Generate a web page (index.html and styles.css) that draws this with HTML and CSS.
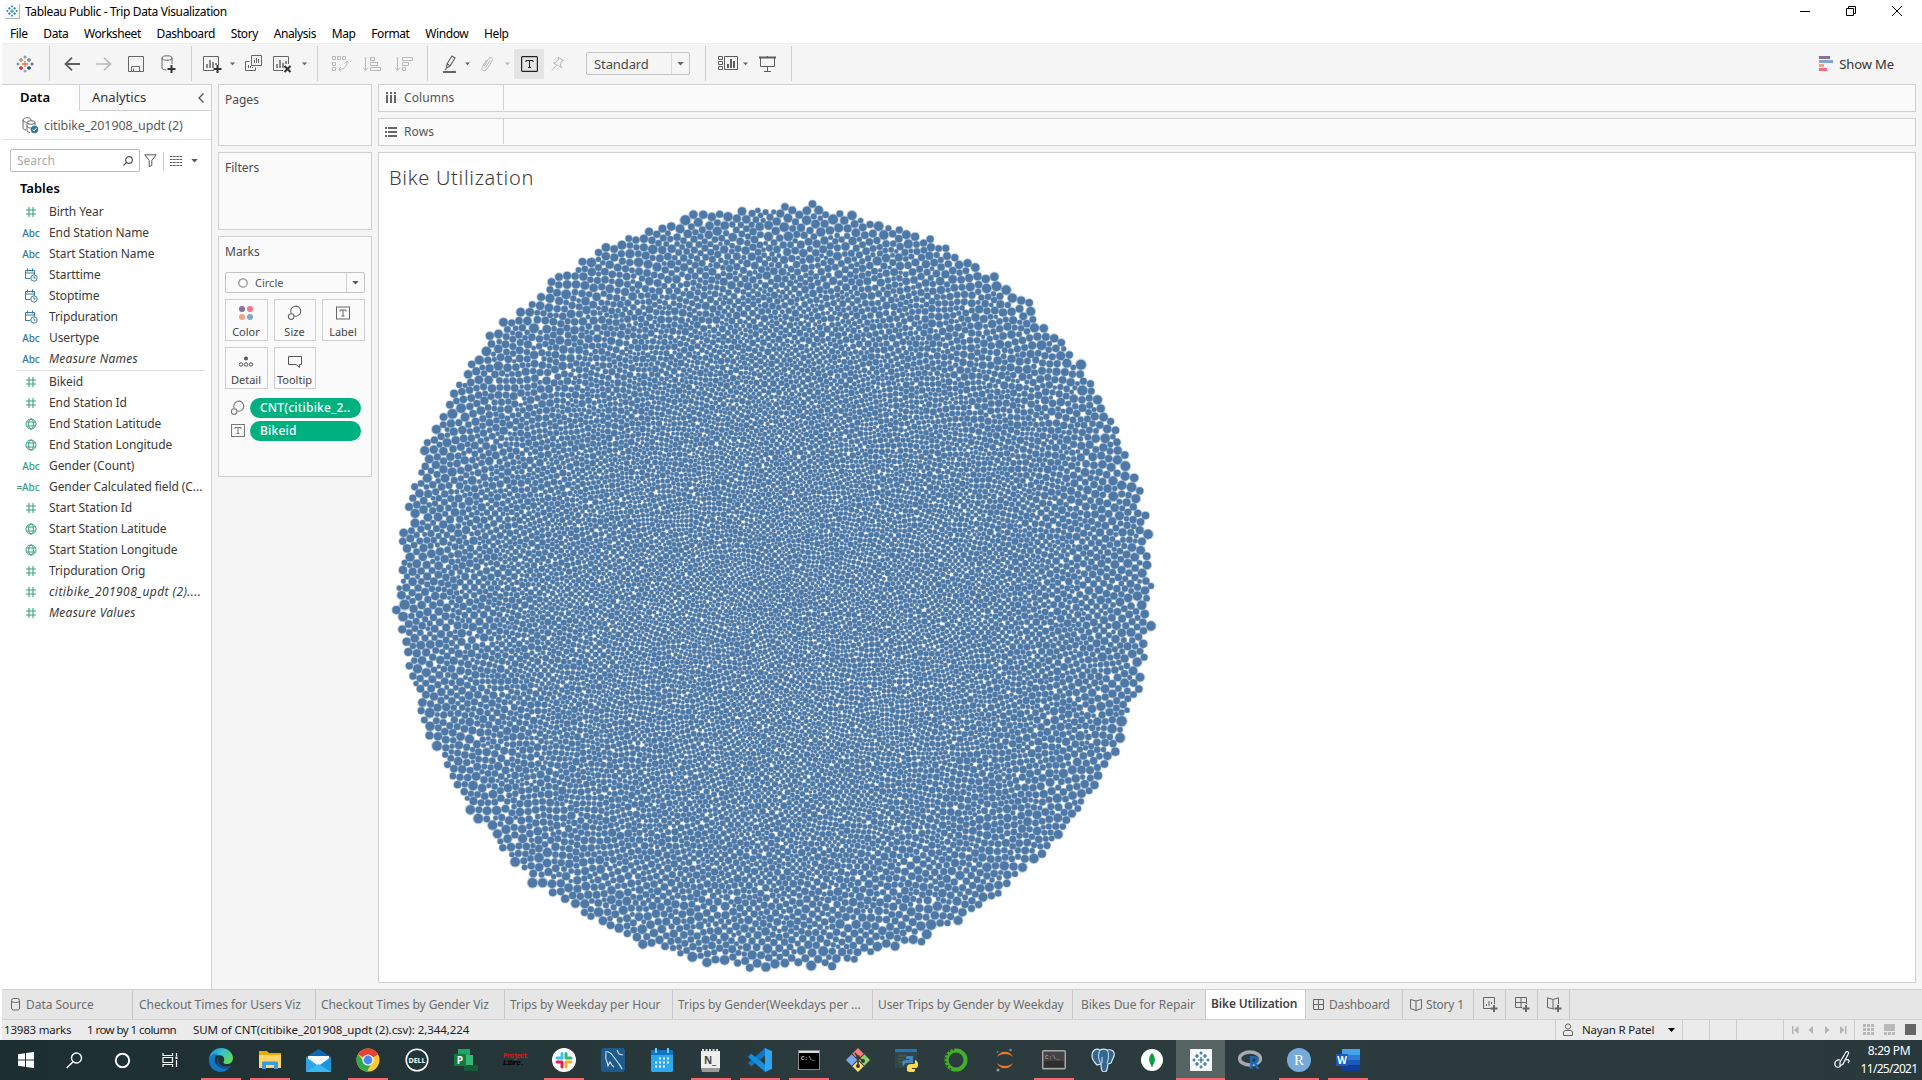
FILE: index.html
```html
<!DOCTYPE html>
<html lang="en">
<head>
<meta charset="utf-8">
<title>Tableau Public - Trip Data Visualization</title>
<link rel="stylesheet" href="styles.css">
</head>
<body>
<svg class="defs" width="0" height="0">
  <symbol id="hash" viewBox="0 0 12 12"><path d="M4 1v10M8 1v10M1 4h10M1 8h10" fill="none" stroke="currentColor" stroke-width="1.1"/></symbol>
  <symbol id="globe" viewBox="0 0 12 12"><g fill="none" stroke="currentColor"><circle cx="6" cy="6" r="5"/><ellipse cx="6" cy="6" rx="2.3" ry="5"/><path d="M1.5 4h9M1.5 8h9"/></g></symbol>
  <symbol id="datetime" viewBox="0 0 14 14"><g fill="none" stroke="currentColor"><path d="M6 10.5H1.500v-8h9v4M1.500 5h9M3.500.5v3M8.500.5v3"/><circle cx="10" cy="10" r="3.200"/><path d="M10 8.200v2h1.500"/></g></symbol>
  <symbol id="down" viewBox="0 0 8 5"><path d="M0 0h8L4 4.500z" fill="currentColor"/></symbol>
  <symbol id="size" viewBox="0 0 16 16"><g fill="none" stroke="currentColor" stroke-width="1.100"><path d="M4.200 8.200A5 5 0 1 1 7.500 11"/><circle cx="4.200" cy="11.600" r="2.800"/></g></symbol>
  <symbol id="label" viewBox="0 0 14 13"><rect x=".5" y=".5" width="13" height="12" fill="none" stroke="currentColor"/><path d="M4 5V3.500h6V5M7 3.500v6M5.500 9.500h3" fill="none" stroke="currentColor"/></symbol>
  <symbol id="sparkle" viewBox="0 0 18 18"><g fill="none" stroke-width="1.300"><path d="M9 6v6M6 9h6" stroke="#e8762c"/><path d="M5 3v4M3 5h4" stroke="#c98a56"/><path d="M13 3v4M11 5h4" stroke="#5b879b"/><path d="M5 11v4M3 13h4" stroke="#c72035"/><path d="M13 11v4M11 13h4" stroke="#1f447e"/><path d="M9 .5v3M7.500 2h3" stroke="#7199a6"/><path d="M9 14.500v3M7.500 16h3" stroke="#8aa0c5"/><path d="M2 7.500v3M.5 9h3" stroke="#7199a6"/><path d="M16 7.500v3M14.500 9h3" stroke="#59649a"/></g></symbol>
  <symbol id="sparkle-blue" viewBox="0 0 18 18"><g fill="none" stroke="currentColor" stroke-width="1.200"><path d="M9 6v6M6 9h6M5 3v4M3 5h4M13 3v4M11 5h4M5 11v4M3 13h4M13 11v4M11 13h4M9 .5v3M7.500 2h3M9 14.500v3M7.500 16h3M2 7.500v3M.5 9h3M16 7.500v3M14.500 9h3"/></g></symbol>
</svg>

<header class="titlebar">
  <span class="app-icon"><svg width="12" height="12"><use href="#sparkle-blue"/></svg></span>
  <span class="app-title">Tableau Public - Trip Data Visualization</span>
  <span class="win-controls">
    <svg width="10" height="10"><path d="M0 5.500h10" stroke="#000"/></svg>
    <svg width="10" height="10" fill="none" stroke="#000"><path d="M.5 2.500h7v7h-7zM2.500 2.500v-2h7v7h-2"/></svg>
    <svg width="10" height="10" stroke="#000"><path d="M0 0l10 10M10 0L0 10"/></svg>
  </span>
</header>

<nav class="menubar"><span>File</span><span>Data</span><span>Worksheet</span><span>Dashboard</span><span>Story</span><span>Analysis</span><span>Map</span><span>Format</span><span>Window</span><span>Help</span></nav>

<div class="toolbar">
  <div class="group g-home"><span class="c32"><svg width="18" height="18"><use href="#sparkle"/></svg></span></div>
  <div class="group g-file">
    <span class="c32"><svg width="16" height="14" fill="none" stroke="#5f5f5f" stroke-width="1.800"><path d="M16 7H1.500M8 .7L1.500 7 8 13.300"/></svg></span>
    <span class="c32 off"><svg width="16" height="14" fill="none" stroke="currentColor" stroke-width="1.600"><path d="M0 7h14.500M8 .7L14.500 7 8 13.300"/></svg></span>
    <span class="c32"><svg width="16" height="16" fill="none" stroke="#666"><path d="M.5.5h15v15H.5zM3.500 15.500v-5h8v5M5.500 12.500v3"/></svg></span>
    <span class="c32"><svg width="15" height="18" fill="none" stroke="#666"><path d="M1 3v10c0 1.200 2 2 4.500 2M11 3v6"/><ellipse cx="6" cy="3" rx="5" ry="2.200"/><path d="M10.500 10v8M6.500 14h8" stroke="#333" stroke-width="2"/></svg></span>
  </div>
  <div class="group g-sheet">
    <span class="c24"><svg width="19" height="18" fill="none" stroke="#666"><path d="M11 15.500H.5V1.500h15V10"/><path d="M4 13V9M7 13V5M10 13V7M13 10V8" stroke-width="1.500"/><path d="M14.500 10v8M10.500 14h8" stroke="#333" stroke-width="2"/></svg></span>
    <span class="c16"><svg width="5" height="4"><use href="#down"/></svg></span>
    <span class="c26"><svg width="17" height="17" fill="none" stroke="#666"><path d="M6.500.5h10v10h-10zM4.500 6.500h-4v9h10v-3M9.500 8V5M11.500 8V3M13.500 8V4M3.500 13v-3M5.500 13v-2M7.500 13v-1"/></svg></span>
    <span class="c36"><svg width="19" height="18" fill="none" stroke="#666"><path d="M10 15.500H.5V1.500h15V9"/><path d="M4 13V9M7 13V5M10 13V8M13 9V6" stroke-width="1.500"/><path d="M11.500 11l6 6M17.500 11l-6 6" stroke="#333" stroke-width="2"/></svg></span>
    <span class="c10"><svg width="5" height="4"><use href="#down"/></svg></span>
  </div>
  <div class="group g-sort off">
    <span class="c32"><svg width="17" height="17" fill="none" stroke="currentColor"><path d="M.5 1.500h3v3h-3zM5.500 1.500h3v3h-3zM10.500 1.500h3v3h-3zM.5 7.500h3v3h-3zM.5 12.500h3v3h-3zM15 6.500c0 5-3 8-8 8M12.500 8.500l2.500-2.500 2 2.500M9 12l-2.500 2.500 2.500 2"/></svg></span>
    <span class="c32"><svg width="18" height="16" fill="none" stroke="currentColor"><path d="M2.500 1v13M0 11.500l2.500 3 2.500-3M7.500 1.500h4v3h-4zM7.500 6.500h7v3h-7zM7.500 11.500h10v3h-10z"/></svg></span>
    <span class="c32"><svg width="18" height="16" fill="none" stroke="currentColor"><path d="M2.500 1v13M0 11.500l2.500 3 2.500-3M7.500 1.500h10v3h-10zM7.500 6.500h6v3h-6zM7.500 11.500h3v3h-3z"/></svg></span>
  </div>
  <div class="group g-edit">
    <span class="c20"><svg width="14" height="18" fill="none" stroke="#666" stroke-width="1.200"><path d="M4 9L9 1l3 2-5 8-3.500 2zM3.500 8.500l4 2.500M3.500 13L2 15"/><path d="M0 17h13" stroke-width="2"/></svg></span>
    <span class="c14"><svg width="5" height="4"><use href="#down"/></svg></span>
    <span class="c26 off"><svg width="14" height="16" fill="none" stroke="currentColor"><path d="M4 10.500L8.500 3c1.700-2.800 5-.8 3.500 2L7 13c-2 3.500-6.500 1.200-4.700-2L6.500 4M5.500 11.500L10 4.500"/></svg></span>
    <span class="c14 off"><svg width="5" height="4"><use href="#down"/></svg></span>
    <span class="toggle"><svg width="17" height="16" fill="none" stroke="#222"><rect x=".6" y=".6" width="15.800" height="14.800" rx="1" stroke-width="1.200"/><path d="M5 6V4.500h7V6M8.500 4.500v7M7 11.500h3"/></svg></span>
    <span class="c28 off"><svg width="14" height="16" fill="none" stroke="currentColor"><path d="M7 1l5.500 3.500-2 .5-1 4 1 2.500-8-4.500 2.500-.5L8 3zM5.500 9L1 14.500"/></svg></span>
    <span class="fit-select"><b>Standard</b><i><svg width="7" height="4"><use href="#down"/></svg></i></span>
  </div>
  <div class="group g-show">
    <svg width="20" height="15" fill="none" stroke="#5c5c5c"><path d="M.5.5h4v3h-4zM.5 5.500h4v3h-4zM.5 10.500h4v3h-4zM6.500.5h13v13h-13z"/><path d="M10 12V8M13 12V3M16 12V5" stroke-width="2"/></svg>
    <span class="c14"><svg width="5" height="4"><use href="#down"/></svg></span>
    <svg class="present" width="17" height="16" fill="none" stroke="#5c5c5c"><path d="M0 1.500h17" stroke-width="2"/><path d="M1.500 2v8.500h14V2M8.500 0v1M8.500 11v4M5 15.500h7"/></svg>
  </div>
  <div class="show-me"><svg width="14" height="15"><path d="M0 0h11v3H0z" fill="#8a6f98"/><path d="M0 4h14v3H0z" fill="#82a6cf"/><path d="M0 8h5v3H0z" fill="#f0a583"/><path d="M0 12h8v3H0z" fill="#f76c82"/></svg><span>Show Me</span></div>
</div>

<main class="workspace">
  <aside class="data-pane">
    <div class="pane-tabs"><b class="t-data">Data</b><span class="t-analytics">Analytics<svg width="6" height="10" fill="none" stroke="#555" stroke-width="1.300"><path d="M5.500.5L1 5l4.500 4.500"/></svg></span></div>
    <div class="source"><svg width="17" height="17" fill="none" stroke="#666"><path d="M1 3v8c0 1 1 2 3 2M1 3c0-3 8-3 8 0M1 3c0 1.500 2 2 3 2"/><ellipse cx="9" cy="5.500" rx="4" ry="1.800"/><path d="M5 5.500v8c0 1 1.500 2 3 2M13 5.500v3M5 9c0 1 2 2 4 2"/><circle cx="12.500" cy="12.500" r="3.800" fill="#367a9b" stroke="none"/><path d="M10.800 12.500l1.300 1.400 2.300-2.700" stroke="#fff"/></svg><span>citibike_201908_updt (2)</span></div>
    <div class="search-row">
      <div class="search"><span>Search</span><svg width="10" height="10" fill="none" stroke="#555" stroke-width="1.200"><circle cx="6" cy="4" r="3.300"/><path d="M3.600 6.400L.5 9.500"/></svg></div>
      <svg class="funnel" width="13" height="13" fill="none" stroke="#555"><path d="M.8.800h11.400L7.800 6.500v5l-2.600 1v-6z"/></svg>
      <span class="view"><svg width="12" height="10" fill="none" stroke="#555"><path d="M0 .5h12M0 3.500h12M0 6.500h12M0 9.500h12" stroke-dasharray="2.500 .7"/></svg></span>
      <svg class="dd" width="7" height="4"><use href="#down"/></svg>
    </div>
    <h3>Tables</h3>
    <ul class="fields">
      <li class="m"><svg width="12" height="12"><use href="#hash"/></svg>Birth Year</li>
      <li><b>Abc</b>End Station Name</li>
      <li><b>Abc</b>Start Station Name</li>
      <li><svg width="14" height="14"><use href="#datetime"/></svg>Starttime</li>
      <li><svg width="14" height="14"><use href="#datetime"/></svg>Stoptime</li>
      <li><svg width="14" height="14"><use href="#datetime"/></svg>Tripduration</li>
      <li><b>Abc</b>Usertype</li>
      <li><b>Abc</b><em>Measure Names</em></li>
    </ul>
    <ul class="fields measures">
      <li><svg width="12" height="12"><use href="#hash"/></svg>Bikeid</li>
      <li><svg width="12" height="12"><use href="#hash"/></svg>End Station Id</li>
      <li><svg width="12" height="12"><use href="#globe"/></svg>End Station Latitude</li>
      <li><svg width="12" height="12"><use href="#globe"/></svg>End Station Longitude</li>
      <li><b>Abc</b>Gender (Count)</li>
      <li><b class="calc">=Abc</b>Gender Calculated field (C...</li>
      <li><svg width="12" height="12"><use href="#hash"/></svg>Start Station Id</li>
      <li><svg width="12" height="12"><use href="#globe"/></svg>Start Station Latitude</li>
      <li><svg width="12" height="12"><use href="#globe"/></svg>Start Station Longitude</li>
      <li><svg width="12" height="12"><use href="#hash"/></svg>Tripduration Orig</li>
      <li><svg width="12" height="12"><use href="#hash"/></svg><em class="wide">citibike_201908_updt (2)....</em></li>
      <li><svg width="12" height="12"><use href="#hash"/></svg><em>Measure Values</em></li>
    </ul>
  </aside>

  <section class="cards">
    <div class="card pages">Pages</div>
    <div class="card filters">Filters</div>
    <div class="card marks">
      <div class="card-title">Marks</div>
      <div class="mark-select"><svg width="10" height="10"><circle cx="5" cy="5" r="4.200" fill="none" stroke="#999" stroke-width="1.300"/></svg><span>Circle</span><i><svg width="7" height="4"><use href="#down"/></svg></i></div>
      <div class="mark-buttons">
        <div><svg width="16" height="16"><circle cx="4" cy="4" r="3" fill="#83719a"/><circle cx="12" cy="4" r="3" fill="#fb7185"/><circle cx="4" cy="12" r="3" fill="#f0a583"/><circle cx="12" cy="12" r="3" fill="#82a6cf"/></svg>Color</div>
        <div><svg width="16" height="16"><use href="#size"/></svg>Size</div>
        <div><svg width="14" height="16"><use href="#label"/></svg>Label</div>
        <div><svg width="16" height="16"><circle cx="8" cy="5.500" r="2" fill="#555"/><g fill="none" stroke="#555"><circle cx="3" cy="11.500" r="1.700"/><circle cx="8" cy="11.500" r="1.700"/><circle cx="13" cy="11.500" r="1.700"/></g></svg>Detail</div>
        <div><svg width="16" height="16" fill="none" stroke="#555"><path d="M1.500 3.500h13v8h-2v3l-3.500-3H1.500z"/></svg>Tooltip</div>
      </div>
      <div class="pill-row"><svg width="16" height="16"><use href="#size"/></svg><span class="pill">CNT(citibike_2..</span></div>
      <div class="pill-row"><svg width="14" height="13"><use href="#label"/></svg><span class="pill">Bikeid</span></div>
    </div>
  </section>

  <section class="sheet">
    <div class="shelf"><span><svg width="12" height="11"><path d="M1 0h2v2H1zM5 0h2v2H5zM9 0h2v2H9zM1 3h2v8H1zM5 3h2v8H5zM9 3h2v8H9z" fill="#666"/></svg>Columns</span></div>
    <div class="shelf"><span><svg width="12" height="10"><path d="M0 0h2v2H0zM3 0h9v2H3zM0 4h2v2H0zM3 4h9v2H3zM0 8h2v2H0zM3 8h9v2H3z" fill="#666"/></svg>Rows</span></div>
    <div class="view-area">
      <h1>Bike Utilization</h1>
      <canvas id="bubbles" width="780" height="784"></canvas>
    </div>
  </section>
</main>

<footer class="sheet-tabs">
  <span class="tab t1"><svg width="9" height="13" fill="none" stroke="#666"><rect x=".5" y=".5" width="8" height="11.500" rx="2"/><path d="M.5 3.500c2 1.300 6 1.300 8 0"/></svg>Data Source</span>
  <span class="tab t2">Checkout Times for Users Viz</span>
  <span class="tab t3">Checkout Times by Gender Viz</span>
  <span class="tab t4">Trips by Weekday per Hour</span>
  <span class="tab t5">Trips by Gender(Weekdays per ...</span>
  <span class="tab t6">User Trips by Gender by Weekday</span>
  <span class="tab t7">Bikes Due for Repair</span>
  <span class="tab t8">Bike Utilization</span>
  <span class="tab t9"><svg width="12" height="12" fill="none" stroke="#666"><path d="M.5.5h10v10H.5zM5.500.5v10M.5 5.500h10"/></svg>Dashboard</span>
  <span class="tab t10"><svg width="12" height="13" fill="none" stroke="#666"><path d="M6 3v9.500M.5 1.500L6 3l5.500-1.500v9L6 12.500.5 10.500z"/></svg>Story 1</span>
  <span class="tab new"><svg width="15" height="15" fill="none" stroke="#666"><path d="M8 11.500H.5v-11h11V7M3.500 9V7M6 9V4M8.500 7V5"/><path d="M11 8v7M7.500 11.500h7" stroke-width="2"/></svg></span>
  <span class="tab new"><svg width="15" height="15" fill="none" stroke="#666"><path d="M7 10.500H.5V.5h11V7M6 .5v10M.5 5.500h11"/><path d="M11 8v7M7.500 11.500h7" stroke-width="2"/></svg></span>
  <span class="tab new"><svg width="15" height="15" fill="none" stroke="#666"><path d="M6 3v9M7 12L.5 10.500V.8L6 2.500 11.500.8V7"/><path d="M11 8v7M7.500 11.500h7" stroke-width="2"/></svg></span>
</footer>

<div class="status">
  <span class="s-marks">13983 marks</span><span class="s-rows">1 row by 1 column</span><span class="s-sum">SUM of CNT(citibike_201908_updt (2).csv): 2,344,224</span>
  <span class="user"><svg width="10" height="14" fill="none" stroke="#666"><circle cx="5" cy="3.500" r="2.600"/><path d="M.5 12.500V10c0-2 1-2.500 2.500-2.500h4c1.500 0 2.500.5 2.500 2.500v2.500z"/></svg><em>Nayan R Patel</em><svg width="7" height="4" fill="#000"><path d="M0 0h7L3.500 4z"/></svg></span>
  <span class="blank"></span><span class="blank"></span><span class="blank wide"></span>
  <span class="nav"><svg width="58" height="8" fill="#b5b5b5"><path d="M1 0h1.500v8H1zM7.500 0v8L3 4zM22 0v8l-4.500-4zM34 0v8l4.500-4zM49 0v8l4.500-4zM54 0h1.500v8H54z"/></svg></span>
  <span class="modes">
    <svg width="11" height="11" fill="#b8b8b8"><path d="M0 0h3v3H0zM4 0h3v3H4zM8 0h3v3H8zM0 4h3v3H0zM4 4h3v3H4zM8 4h3v3H8zM0 8h3v3H0zM4 8h3v3H4zM8 8h3v3H8z"/></svg>
    <svg width="11" height="11" fill="#b8b8b8"><path d="M0 0h11v7H0zM0 8h3v3H0zM4 8h3v3H4zM8 8h3v3H8z"/></svg>
    <svg width="11" height="11" fill="#666"><path d="M0 0h11v11H0z"/></svg>
  </span>
</div>

<div class="taskbar">
  <span class="sys"><svg width="16" height="16" fill="#fff"><path d="M0 2.200l7-1v6.300H0zM8 1l8-1v7.500H8zM0 8.500h7v6.300l-7-1zM8 8.500h8V16l-8-1z"/></svg></span>
  <span class="sys"><svg width="17" height="17" fill="none" stroke="#fff" stroke-width="1.400"><circle cx="10.500" cy="6" r="5"/><path d="M7 9.700L.7 16"/></svg></span>
  <span class="sys"><svg width="17" height="17" fill="none" stroke="#fff" stroke-width="2"><circle cx="8.500" cy="8.500" r="6.700"/></svg></span>
  <span class="sys"><svg width="17" height="16" fill="none" stroke="#fff" stroke-width="1.200"><path d="M1 1v2.500h9.500V1M1 5.500h9.500v5H1zM1 15v-2.500h9.500V15M14.500 1v3M14.500 8v7"/><path d="M13.500 4.500h2v2.500h-2z" fill="#fff" stroke="none"/></svg></span>
  <span class="app on"><svg width="24" height="24"><defs><linearGradient id="edge" x1="0" y1="0" x2="1" y2=".6"><stop offset="0" stop-color="#1687d0"/><stop offset=".5" stop-color="#35c0d0"/><stop offset="1" stop-color="#62d858"/></linearGradient></defs><path d="M0 11C1 4 6 0 12 0c7 0 12 5 12 10 0 4-3 6-6 6-4 0-4-2-3-3 1-3-1-6-5-6S2 9 0 11z" fill="url(#edge)"/><path d="M0 12c0-4 5-7 9-6-6 4-3 13 5 14 3 0 6-1 8-3-2 4-6 7-10 7C5 24 0 19 0 12z" fill="#1178c6"/><path d="M8 12c-1 5 3 9 8 9 3 0 5-2 6-3-3 1-10 1-12-3-1-2-1-4 0-6-1 0-2 2-2 3z" fill="#174f96"/></svg></span>
  <span class="app on"><svg width="22" height="20"><path d="M0 1h8l2 2h12v15H0z" fill="#e8a90c"/><path d="M0 5h22v13H0z" fill="#ffd566"/><path d="M3 19v-6c0-1 .5-1.500 1.500-1.500h13c1 0 1.500.5 1.500 1.500v6h-4v-4H7v4z" fill="#3c9be0"/></svg></span>
  <span class="app"><svg width="25" height="23"><path d="M0 8L12.500 0 25 8v15H0z" fill="#0f67b8"/><path d="M2 7h21v10H2z" fill="#f3f9ff"/><path d="M0 8l12.500 9L0 23z" fill="#30a3e6"/><path d="M25 8L8 20l-8 3h25z" fill="#1b96dd"/><path d="M0 23l12.500-8L25 23z" fill="#39b9f1"/></svg></span>
  <span class="app on"><svg width="24" height="24"><circle cx="12" cy="12" r="11.500" fill="#fcc934"/><path d="M12 12L2 6.300A11.500 11.500 0 0 1 22 6.300z" fill="#e94335"/><path d="M2 6.300A11.500 11.500 0 0 0 11 23.500l5-9.500h-8z" fill="#2da94f"/><path d="M12 6.300h10L12 12z" fill="#e94335"/><circle cx="12" cy="12" r="5.600" fill="#fff"/><circle cx="12" cy="12" r="4.400" fill="#4587f3"/></svg></span>
  <span class="app"><svg width="24" height="24"><circle cx="12" cy="12" r="10.800" fill="none" stroke="#fff" stroke-width="1.500"/><text x="12" y="15" class="dell">DELL</text></svg></span>
  <span class="app"><svg width="24" height="24"><path d="M4 1h12v17H4z" fill="#1fa463"/><path d="M12 7h7v10h-7z" fill="#35b778"/><path d="M10 17h14v6H10z" fill="#185c37"/><path d="M0 6h12v12H0z" fill="#107c41"/><text x="6" y="15.500" class="letter">P</text></svg></span>
  <span class="app"><svg width="26" height="18"><text x="1" y="7" class="plib">Project</text><text x="1" y="14" class="plib dark">Libre.</text></svg></span>
  <span class="app on"><svg width="24" height="24"><circle cx="12" cy="12" r="12" fill="#fff"/><g stroke-width="3" stroke-linecap="round"><path d="M10 5.500V10" stroke="#36c5f0"/><path d="M5 10h5" stroke="#36c5f0"/><path d="M14 5.500V10M14.500 10H19" stroke="#2eb67d"/><path d="M14 14v5M14.500 14H19" stroke="#ecb22e"/><path d="M10 14v5M5 14h5" stroke="#e01e5a"/></g></svg></span>
  <span class="app"><svg width="24" height="24"><rect width="24" height="24" rx="3" fill="#1f5a8c"/><path d="M4 4c3-1 6 1 8 4l6 8c1 1 2 3 3 5M5 5c-1 5 0 7 1 9l1 4 2-4c1 2 2 4 4 5M16 2l2 4 4 1" fill="none" stroke="#d6e4ee" stroke-width="1.100"/></svg></span>
  <span class="app"><svg width="22" height="24"><rect y="2" width="22" height="22" rx="1.500" fill="#2ba8ee"/><path d="M0 2h22v5H0z" fill="#1273bf"/><path d="M5 0v5M17 0v5" stroke="#6fd0f5" stroke-width="2"/><path d="M8 10.500h11M4 14.500h15M4 18.500h11" stroke="#fff" stroke-width="2" stroke-dasharray="2 2"/></svg></span>
  <span class="app on"><svg width="19" height="23"><path d="M0 2h19v17H0z" fill="#eee"/><path d="M0 19h19l-1 4H1z" fill="#999"/><path d="M1 1.500h17" stroke="#ddd" stroke-width="3" stroke-dasharray="2 1.500"/><text x="9" y="15" class="letter gray">N_</text></svg></span>
  <span class="app on"><svg width="24" height="24"><path d="M17 0L0 15l3 3.500L18 7z" fill="#1177c0"/><path d="M17 24L0 9l3-3.500L18 17z" fill="#138fdf"/><path d="M17 0l7 3v18l-7 3z" fill="#2aa6f2"/></svg></span>
  <span class="app on"><svg width="22" height="20"><rect x=".5" y=".5" width="21" height="19" fill="#000" stroke="#888"/><path d="M1 1h20v2H1z" fill="#ddd"/><text x="3" y="10" class="term">C:\_</text></svg></span>
  <span class="app"><svg width="24" height="24"><g transform="rotate(45 12 12)"><path d="M3.500 3.500h8v8h-8z" fill="#f57f79"/><path d="M12.500 3.500h8v8h-8z" fill="#8ed06c"/><path d="M3.500 12.500h8v8h-8z" fill="#7ba7ef"/><path d="M12.500 12.500h8v8h-8z" fill="#ffdc73"/></g><path d="M9 5l3 4v9M12 9l5 4" stroke="#403633" stroke-width="1.600" fill="none"/><circle cx="12" cy="9" r="2" fill="#403633"/><circle cx="12" cy="18" r="2" fill="#403633"/><circle cx="17" cy="13" r="2" fill="#403633"/></svg></span>
  <span class="app"><svg width="24" height="24"><path d="M0 1h22v19H0z" fill="#34464a"/><path d="M0 1h22v3H0z" fill="#2476b8"/><path d="M3 8h8M3 11h6M3 14h7" stroke="#376f47"/><path d="M12 8h6v7h-6c-2 0-3 1-3 3H8c-2-5 0-6 4-6h2v-1h-3V9z" fill="#4585b9"/><path d="M20 12c4 1 4 8 1 8h-4v1h3v2c-2 2-7 1-8 0v-4c0-2 2-3 4-3h3c1 0 1-2 1-4z" fill="#ffda4b"/></svg></span>
  <span class="app"><svg width="24" height="24"><circle cx="12" cy="12" r="9.500" fill="none" stroke="#43b02a" stroke-width="4"/><path d="M10 1.500A10.500 10.500 0 0 0 8 21.500" fill="none" stroke="#213438" stroke-width="1.500" stroke-dasharray="1.500 2.500"/></svg></span>
  <span class="app"><svg width="20" height="24"><path d="M2 9c3-7 13-7 16 0-4-4-12-4-16 0zM2 15c3 7 13 7 16 0-4 4-12 4-16 0z" fill="#f37726"/><circle cx="15.500" cy="2" r="1.300" fill="#888"/><circle cx="3" cy="22" r="1.500" fill="#999"/><circle cx="2.500" cy="4" r="1" fill="#777"/></svg></span>
  <span class="app on"><svg width="24" height="20"><rect x=".7" y=".7" width="22.600" height="18" rx="1" fill="#444" stroke="#aaa" stroke-width="1.400"/><path d="M2 11h20v6H2z" fill="#2e2e2e"/><text x="3" y="9" class="term dim">C:\_</text></svg></span>
  <span class="app"><svg width="24" height="24"><path d="M1 8C1 2 5 0 9 2c2-1 5-1 7 0 5-1 8 1 7 6l-3 7-3 1c-1 6-1 8-4 8-2 0-3-3-3-8l-4 1C3 14 1 11 1 8z" fill="#336791" stroke="#dfe8ee" stroke-width="1.200"/><path d="M9 2c-2 4-2 9 1 14M16 2c2 3 2 8 0 13M11 9v6" fill="none" stroke="#dfe8ee"/></svg></span>
  <span class="app"><svg width="22" height="22"><circle cx="11" cy="11" r="11" fill="#fff"/><path d="M11 4c4 4 4 9 0 13-4-4-4-9 0-13z" fill="#13aa52"/><path d="M11 5v13" stroke="#0b7a3a"/></svg></span>
  <span class="app on active"><svg class="tableau" width="22" height="22"><path d="M0 0h22v22H0z" fill="#f5f7f8"/><use href="#sparkle-blue" x="2" y="2" width="18" height="18"/></svg></span>
  <span class="app"><svg width="24" height="20"><ellipse cx="12" cy="8.500" rx="10.500" ry="6.500" fill="none" stroke="#a7a9ad" stroke-width="3.500"/><text x="16" y="18.500" class="rlogo">R</text></svg></span>
  <span class="app on"><svg width="24" height="24"><circle cx="12" cy="12" r="12" fill="#75aadb"/><text x="12" y="17" class="rstudio">R</text></svg></span>
  <span class="app on"><svg width="24" height="22"><path d="M6 0h18v6H6z" fill="#41a5ee"/><path d="M6 6h18v5H6z" fill="#2b7cd3"/><path d="M6 11h18v5H6z" fill="#185abd"/><path d="M6 16h18v6H6z" fill="#103f91"/><path d="M0 5h12v12H0z" fill="#185abd"/><text x="6" y="15" class="letter">W</text></svg></span>
  <span class="pen"><svg width="16" height="18" fill="none" stroke="#fff" stroke-width="1.200"><path d="M6 11L12 1c1-1 3 0 2.500 1.500L9 13l-3 2zM6 9c-3-1-6 2-5 5s5 3 6 0M12 9c3-1 4 1 2 3"/></svg></span>
  <span class="clock"><span>8:29 PM</span><span>11/25/2021</span></span>
</div>
<script src="script.js"></script>
</body>
</html>
```

FILE: styles.css
```css
* { box-sizing: border-box; }
body {
  margin: 0; width: 1922px; height: 1080px; overflow: hidden;
  display: grid; grid-template-rows: 22px 21px 41px 905px 31px 20px 40px;
  font-family: "Noto Sans", "Open Sans", sans-serif; font-size: 12px;
  color: #333; background: #fff; white-space: nowrap;
}
svg { flex: none; display: block; }
i, em { font-style: normal; }
.defs { position: absolute; }

.titlebar { display: flex; align-items: center; padding-left: 5px; color: #000; }
.app-icon { width: 15px; height: 15px; display: grid; place-items: center; color: #1f77a8; background: #f4f8fa; border: solid #b5b5b5; border-width: 0 1px 1px 0; margin-right: 5px; }
.app-title { letter-spacing: -.36px; padding-top: 1px; }
.win-controls { margin-left: auto; display: flex; gap: 36px; padding-right: 20px; margin-bottom: 1px; }

.menubar { display: flex; gap: 15.8px; padding: 2px 0 0 10px; align-items: center; color: #000; letter-spacing: -.42px; }

.toolbar { margin-left: 2px; background: #f5f5f5; border-top: 1px solid #eee; display: flex; align-items: center; color: #666; padding-bottom: 1px; }
.group { height: 35px; display: flex; align-items: center; border-right: 1px solid #d0d0d0; }
.group > span { display: flex; justify-content: center; }
.off { color: #b8b8b8; }
.c10 { width: 12px; } .c14 { width: 14px; } .c16 { width: 16px; } .c20 { width: 20px; }
.c24 { width: 24px; } .c26 { width: 26px; } .c28 { width: 28px; } .c32 { width: 32px; } .c36 { width: 32px; }
.g-home { width: 48px; padding-left: 7px; }
.g-file { width: 142px; padding-left: 6px; }
.g-sheet { width: 126px; padding-left: 8px; }
.g-sort { width: 110px; padding-left: 6px; }
.g-edit { width: 278px; padding-left: 12px; }
.g-show { width: 86px; padding-left: 12px; }
.present { margin-left: 7px; }
.group > .toggle { width: 30px; height: 30px; background: #e4e4e4; align-items: center; }
.group > .fit-select { width: 104px; height: 23px; margin-left: 14px; border: 1px solid #c4c4c4; border-radius: 2px; justify-content: flex-start; align-items: center; }
.fit-select b { font-weight: 400; font-size: 13px; width: 84px; padding-left: 7px; color: #4a4a4a; letter-spacing: -.1px; }
.fit-select i { border-left: 1px solid #ddd; height: 21px; width: 18px; display: grid; place-items: center; }
.show-me { margin-left: auto; padding-right: 28px; display: flex; gap: 6px; align-items: center; font-size: 13px; color: #333; letter-spacing: -.1px; }

.workspace { background: #f5f5f5; display: flex; margin-left: 2px; }
.data-pane { width: 210px; background: #fff; border: solid #d0d0d0; border-width: 1px 1px 0 0; }
.pane-tabs { display: flex; height: 26px; font-size: 13px; line-height: 25px; }
.t-data { width: 77px; padding-left: 18px; color: #000; font-weight: 600; }
.t-analytics { flex: 1; display: flex; align-items: center; justify-content: space-between; padding: 0 7px 0 12px; background: #fafafa; border: solid #d0d0d0; border-width: 0 0 1px 1px; }
.source { height: 29px; border-bottom: 1px solid #e0e0e0; display: flex; align-items: center; padding-left: 20px; gap: 5px; color: #5a5a5a; font-size: 12.5px; letter-spacing: -.1px; }
.search-row { display: flex; align-items: center; padding: 9px 0 0 8px; color: #555; }
.search { width: 130px; height: 23px; border: 1px solid #bbb; border-radius: 2px; display: flex; align-items: center; justify-content: space-between; padding: 0 6px; color: #aaa; }
.funnel { margin-left: 4px; }
.view { margin-left: 6px; border-left: 1px solid #ccc; padding: 4px 0 4px 6px; }
.dd { margin-left: 9px; }
.data-pane h3 { margin: 7px 0 0 18px; font-size: 13px; line-height: 18px; font-weight: 600; color: #000; height: 22px; }
.fields { list-style: none; margin: 0; padding: 0; color: #367a9b; }
.fields li { height: 21px; display: grid; grid-template-columns: 30px 1fr; column-gap: 6px; padding-left: 11px; align-items: center; color: #3a3a3a; font-size: 12px; letter-spacing: -.08px; }
.fields li > svg, .fields li > b { justify-self: center; color: #367a9b; margin-left: 6px; }
.fields li > b { font-size: 10px; font-weight: 500; }
.fields em { font-style: italic; letter-spacing: .25px; }
.fields .wide { letter-spacing: .43px; }
.fields .m > svg { color: #3aa183; }
.measures { margin: 1px 6px 0 15px; border-top: 1px solid #ddd; }
.measures li { padding-left: 0; margin-left: -4px; }
.measures li > svg, .measures li > b { color: #3aa183; }
.fields li > .calc { margin-left: 0; }

.cards { width: 154px; margin-left: 6px; display: flex; flex-direction: column; gap: 6px; color: #4a4a4a; }
.card { border: 1px solid #d0d0d0; background: #fafafa; padding: 6px; height: 62px; }
.filters { height: 78px; }
.marks { height: 241px; }
.mark-select { margin-top: 12px; width: 140px; height: 21px; border: 1px solid #c4c4c4; border-radius: 2px; display: flex; align-items: center; padding-left: 12px; gap: 7px; color: #555; font-size: 11px; }
.mark-select i { margin-left: auto; width: 18px; height: 19px; border-left: 1px solid #d0d0d0; display: grid; place-items: center; }
.mark-buttons { display: grid; grid-template-columns: 43px 42px 43px; gap: 6px; width: 140px; margin-top: 6px; color: #555; }
.mark-buttons > div { height: 42px; border: 1px solid #d0d0d0; display: flex; flex-direction: column; align-items: center; padding: 5px 1px 0 0; gap: 3px; font-size: 11px; line-height: 15px; color: #444; }
.mark-buttons svg { color: #666; }
.pill-row { display: grid; grid-template-columns: 25px 111px; align-items: center; height: 23px; color: #777; }
.mark-buttons + .pill-row { margin-top: 7px; }
.pill-row svg { justify-self: center; }
.pill { height: 20px; line-height: 19px; border-radius: 10px; background: #00b180; color: #fff; padding-left: 10px; font-weight: 500; font-size: 12px; letter-spacing: .2px; }

.sheet { margin: 0 6px 7px 6px; flex: 1; display: grid; grid-template-rows: 28px 28px 831px; gap: 6px; }
.sheet > div { border: 1px solid #d0d0d0; background: #fafafa; }
.shelf > span { display: flex; align-items: center; width: 125px; height: 25px; padding-left: 6px; gap: 7px; border-right: 1px solid #d0d0d0; color: #555; letter-spacing: .1px; }
.sheet > .view-area { background: #fff; padding-left: 10px; }
h1 { margin: 10px 0 0; font-size: 20px; line-height: 30px; font-weight: 300; color: #3c3c3c; height: 32px; letter-spacing: .7px; }
#bubbles { display: block; margin-left: -5px; }

.sheet-tabs { margin-left: 2px; border: solid #cfcfcf; border-width: 1px 0; background: #e6e6e6; display: flex; color: #6c6c6c; font-size: 12px; height: 31px; }
.tab { border-right: 1px solid #c9c9c9; display: flex; align-items: center; gap: 6px; padding-left: 6px; overflow: hidden; letter-spacing: -.05px; }
.t1 { width: 131px; padding-left: 9px; } .t2 { width: 183px; } .t3 { width: 189px; padding-left: 5px; letter-spacing: -.08px; } .t4 { width: 168px; padding-left: 5px; }
.t5 { width: 200px; padding-left: 5px; } .t6 { width: 200px; padding-left: 5px; letter-spacing: -.1px; } .t7 { width: 133px; padding-left: 8px; }
.t8 { width: 100px; background: #fff; color: #444; font-weight: 600; padding-left: 5px; padding-bottom: 3px; letter-spacing: -.15px; }
.t9 { width: 97px; padding-left: 7px; gap: 4px; letter-spacing: -.15px; } .t10 { width: 71px; padding-left: 7px; gap: 4px; letter-spacing: -.2px; }
.new { width: 32px; padding-left: 9px; }

.status { margin-left: 2px; background: #ebebeb; display: flex; align-items: stretch; line-height: 20px; color: #222; font-size: 11.5px; letter-spacing: -.2px; }
.s-marks { width: 83px; padding-left: 2px; } .s-rows { width: 106px; padding-left: 2px; letter-spacing: -.55px; }
.s-sum { padding-left: 2px; letter-spacing: -.06px; }
.user { margin-left: auto; width: 127px; border-left: 1px solid #ccc; display: flex; align-items: center; padding-left: 7px; gap: 9px; }
.user em { width: 77px; }
.blank, .nav, .modes { border-left: 1px solid #ccc; width: 27px; }
.blank.wide { width: 47px; }
.nav { width: 71px; padding: 6px 0 0 7px; }
.modes { width: 68px; display: flex; gap: 10px; padding: 4px 0 0 8px; }

.taskbar { background: linear-gradient(90deg, #1d2e31, #2b3b3e 45%, #29393c); display: flex; padding-left: 2px; color: #fff; }
.sys { width: 48px; display: grid; place-items: center; }
.sys + .app { margin-left: 2px; }
.app { width: 49px; display: grid; place-items: center; background: linear-gradient(#f4696f, #f4696f) no-repeat center bottom / 0 2px; }
.app.on { background-size: 40px 2px; }
.app.active { background-color: #566463; background-size: 100% 2px; }
.tableau { color: #1f6a95; }
.pen { margin-left: auto; width: 20px; display: grid; place-items: center; }
.clock { width: 70px; display: flex; flex-direction: column; align-items: center; line-height: 18px; padding: 2px 2px 0 6px; letter-spacing: -.7px; }
.clock span:first-child { letter-spacing: -.4px; }
.letter { font: 700 10px "Open Sans", sans-serif; fill: #fff; text-anchor: middle; }
.gray { fill: #444; }
.dell { font: 700 7px "Open Sans", sans-serif; fill: #fff; text-anchor: middle; }
.plib { font: 700 7px "Liberation Mono", monospace; fill: #e01414; letter-spacing: -.8px; }
.dark { fill: #000; font-style: italic; }
.term { font: 6px "Liberation Mono", monospace; fill: #fff; }
.dim { fill: #bbb; }
.rlogo { font: 700 17px "Open Sans", sans-serif; fill: #2066b8; text-anchor: middle; }
.rstudio { font: 15px "Liberation Serif", serif; fill: #fff; text-anchor: middle; }
```

FILE: script.js
```js
// Packed bubble chart: one circle per bike, placed around a growing front chain.
const COUNT = 13983;
let seed = 20190807;
function random() {
  seed = (seed * 1664525 + 1013904223) >>> 0;
  return seed / 4294967296;
}

const circles = [];
for (let i = 0; i < COUNT; i++) {
  const t = i / COUNT;
  const base = 2.4 + 0.3 * t + 1.5 * Math.pow(t, 3.2);
  const spread = random() + random() - 1;
  circles.push({ x: 0, y: 0, r: Math.max(1.3, base * (1 + 0.42 * spread)) });
}

function place(b, a, c) {
  const dx = b.x - a.x, dy = b.y - a.y, d2 = dx * dx + dy * dy;
  const a2 = (a.r + c.r) ** 2, b2 = (b.r + c.r) ** 2;
  if (a2 > b2) {
    const x = (d2 + b2 - a2) / (2 * d2), y = Math.sqrt(Math.max(0, b2 / d2 - x * x));
    c.x = b.x - x * dx - y * dy;
    c.y = b.y - x * dy + y * dx;
  } else {
    const x = (d2 + a2 - b2) / (2 * d2), y = Math.sqrt(Math.max(0, a2 / d2 - x * x));
    c.x = a.x + x * dx - y * dy;
    c.y = a.y + x * dy + y * dx;
  }
}
function intersects(a, b) {
  const dr = a.r + b.r - 1e-6, dx = b.x - a.x, dy = b.y - a.y;
  return dr > 0 && dr * dr > dx * dx + dy * dy;
}
function score(n) {
  const a = n.c, b = n.next.c, ab = a.r + b.r;
  const dx = (a.x * b.r + b.x * a.r) / ab, dy = (a.y * b.r + b.y * a.r) / ab;
  return dx * dx + dy * dy;
}

let a = { c: circles[0] }, b = { c: circles[1] }, c = { c: circles[2] };
a.c.x = -b.c.r;
b.c.x = a.c.r;
place(b.c, a.c, c.c);
a.next = c.prev = b;
b.next = a.prev = c;
c.next = b.prev = a;

pack: for (let i = 3; i < COUNT; ++i) {
  place(a.c, b.c, circles[i]);
  c = { c: circles[i] };
  let j = b.next, k = a.prev, sj = b.c.r, sk = a.c.r;
  do {
    if (sj <= sk) {
      if (intersects(j.c, c.c)) { b = j; a.next = b; b.prev = a; --i; continue pack; }
      sj += j.c.r; j = j.next;
    } else {
      if (intersects(k.c, c.c)) { a = k; a.next = b; b.prev = a; --i; continue pack; }
      sk += k.c.r; k = k.prev;
    }
  } while (j !== k.next);
  c.prev = a; c.next = b; a.next = b.prev = b = c;
  let best = score(a);
  while ((c = c.next) !== b) {
    const s = score(c);
    if (s < best) { a = c; best = s; }
  }
  b = a.next;
}

let minX = 0, maxX = 0, minY = 0, maxY = 0;
for (const p of circles) {
  minX = Math.min(minX, p.x - p.r); maxX = Math.max(maxX, p.x + p.r);
  minY = Math.min(minY, p.y - p.r); maxY = Math.max(maxY, p.y + p.r);
}
const sx = 764 / (maxX - minX), sy = 772 / (maxY - minY);
const ctx = document.getElementById("bubbles").getContext("2d");
const px = p => 8 + (p.x - minX) * sx, py = p => 5 + (p.y - minY) * sy;
function dots(scale, style) {
  ctx.fillStyle = style;
  for (const p of circles) {
    ctx.beginPath();
    ctx.arc(px(p), py(p), p.r * sx * scale, 0, Math.PI * 2);
    ctx.fill();
  }
}
dots(1.14, "rgba(78,121,167,.36)");
dots(0.93, "#4e79a7");
```
